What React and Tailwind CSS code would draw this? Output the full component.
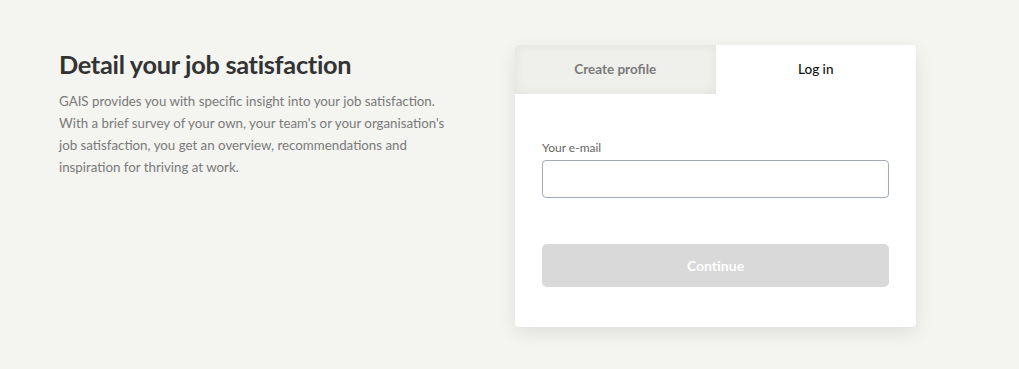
export default function App() {
  return (
    <div
      className="min-h-screen w-full bg-[#f4f4f0]"
      style={{ fontFamily: "Lato, 'Noto Sans', sans-serif" }}
    >
      <div className="flex items-start pl-[59px] pt-[45px]">
        <div className="w-[410px] pt-[2px]">
          <h1 className="text-[25.3px] font-bold leading-[34px] tracking-[-0.3px] text-[#333333]">
            Detail your job satisfaction
          </h1>
          <p className="mt-[9px] w-[400px] text-[13.3px] leading-[22px] text-[#7a7a7a]">
            GAIS provides you with specific insight into your job satisfaction.
            With a brief survey of your own, your team's or your organisation's
            job satisfaction, you get an overview, recommendations and
            inspiration for thriving at work.
          </p>
        </div>

        <div className="ml-[46px] w-[401px] overflow-hidden rounded-[4px] bg-white shadow-[0_6px_18px_rgba(0,0,0,0.09)]">
          <div className="flex h-[49px]">
            <button className="flex flex-1 items-center justify-center bg-[#efefeb] text-[13.5px] font-bold text-[#7a7a7a] shadow-[inset_0_0_12px_rgba(0,0,0,0.06)]">
              Create profile
            </button>
            <button className="flex flex-1 items-center justify-center bg-white text-[13.5px] font-medium text-[#111111]">
              Log in
            </button>
          </div>

          <div className="px-[27px] pb-[40px] pt-[47px]">
            <label className="block text-[12px] leading-[14px] text-[#666666]">
              Your e-mail
            </label>
            <input
              type="email"
              className="mt-[5px] block h-[38px] w-full rounded-[4px] border border-[#a3aab8] bg-white px-3 text-[14px] outline-none"
            />
            <button className="mt-[46px] flex h-[43px] w-full items-center justify-center rounded-[5px] bg-[#d9d9d9] text-[14px] font-bold text-white">
              Continue
            </button>
          </div>
        </div>
      </div>
    </div>
  );
}
